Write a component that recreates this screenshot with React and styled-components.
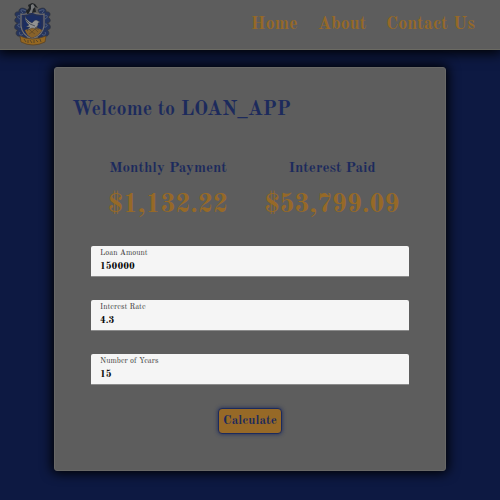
import React, { useState } from "react";
import styled, { createGlobalStyle, ThemeProvider } from "styled-components";

const theme = {
  gray: "#5d5d5d",
  navy: "#0d1942",
  ink: "#1c2a5c",
  gold: "#966927",
  serif: '"Old Standard TT", "Liberation Serif", serif',
};

const GlobalStyle = createGlobalStyle`
  *, *::before, *::after { box-sizing: border-box; }
  body {
    margin: 0;
    background: ${theme.navy};
    font-family: ${theme.serif};
    font-weight: 700;
  }
`;

const Page = styled.div`
  display: flex;
  flex-direction: column;
  min-height: 100vh;
`;

const Header = styled.header`
  display: flex;
  align-items: center;
  justify-content: space-between;
  padding: 0 25px 1px 14px;
  height: 50px;
  background: ${(p) => p.theme.gray};
  border-bottom: 1px solid #6b6a62;
  box-shadow: 0 1px 12px 2px #000;
`;

const HomeLink = styled.a`
  display: flex;
`;

const Nav = styled.nav`
  display: flex;
  gap: 20px;
`;

const NavLink = styled.a`
  color: ${(p) => p.theme.gold};
  font-size: 18px;
  line-height: 24px;
  text-decoration: none;
`;

const Card = styled.main`
  margin: 17px 54px 30px;
  padding: 28px 17px 36px;
  background: ${(p) => p.theme.gray};
  border: 1px solid #686866;
  border-radius: 3px;
  box-shadow: 0 0 12px 2px #000;
`;

const Title = styled.h1`
  margin: 0;
  color: ${(p) => p.theme.ink};
  font-size: 20px;
  line-height: 28px;
`;

const Results = styled.section`
  display: grid;
  grid-template-columns: 1fr 1fr;
  margin: 33px 0 22px;
  padding: 0 14px;
  text-align: center;
`;

const Result = styled.div`
  display: flex;
  flex-direction: column;
  align-items: center;
`;

const ResultLabel = styled.h2`
  margin: 0;
  color: ${(p) => p.theme.ink};
  font-size: 15px;
  line-height: 24px;
`;

const ResultValue = styled.output`
  margin-top: 6px;
  margin-bottom: 1px;
  color: ${(p) => p.theme.gold};
  font-size: 26px;
  line-height: 36px;
`;

const Form = styled.form`
  display: flex;
  flex-direction: column;
  gap: 23px;
  padding: 0 19px;
`;

const Field = styled.label`
  display: flex;
  flex-direction: column;
  height: 31px;
  padding: 2px 9px;
  background: #f5f5f5;
  border-bottom: 1px solid #8b8b8b;
  border-radius: 2px 2px 0 0;
`;

const FieldLabel = styled.span`
  color: #3c3c3c;
  font-size: 8px;
  font-weight: 400;
  line-height: 11px;
`;

const FieldInput = styled.input`
  width: 100%;
  padding: 0;
  border: 0;
  outline: 0;
  background: transparent;
  color: #080808;
  font: 700 10px/14px ${(p) => p.theme.serif};
`;

const Button = styled.button`
  align-self: center;
  width: 64px;
  height: 26px;
  padding: 0;
  background: ${(p) => p.theme.gold};
  border: 1px solid ${(p) => p.theme.ink};
  border-radius: 4px;
  box-shadow: 0 0 4px ${(p) => p.theme.ink};
  color: ${(p) => p.theme.ink};
  font: 700 13px/20px ${(p) => p.theme.serif};
  cursor: pointer;
`;

function Crest() {
  return (
    <svg width="37" height="46" viewBox="0 0 37 46" aria-hidden="true">
      <g fill="#25345c" stroke="#30343c" strokeWidth=".7">
        <path d="M13 9C8 5 4 8 5 11c-5-1-5 4-2 5-4 3-2 6 1 6-5 2-4 7 0 7-4 3-1 7 2 6 0 4 4 4 6 3l2-4L9 18Z" />
        <path d="M24 9c5-4 9-1 8 2 5-1 5 4 2 5 4 3 2 6-1 6 5 2 4 7 0 7 4 3 1 7-2 6 0 4-4 4-6 3l-2-4 5-16Z" />
      </g>
      <g fill="none" stroke="#5c6984" strokeWidth=".8">
        <path d="M12 10C6 7 6 10 9 12M6 15c-3-2-3 2 0 3M6 23c-4 0-2 4 1 3M6 31c-2 3 2 4 3 2M25 10c6-3 6 0 3 2M31 15c3-2 3 2 0 3M31 23c4 0 2 4-1 3M31 31c2 3-2 4-3 2" />
      </g>
      <path d="M7 13q6 1 11-2 5 3 12 2v12q-1 9-12 13Q8 34 7 25Z" fill="#202f62" stroke="#77736d" strokeWidth="1.2" />
      <path d="M9 15q5 0 9-2 5 2 10 2v10q-1 7-10 11-8-4-9-11Z" fill="#1b2d62" stroke="#30343d" strokeWidth=".5" />
      <path d="m11 29 3-1 2-2 3 1 3-1 4 2 2 1q-2 5-10 8-6-3-7-8Z" fill="#88622a" />
      <path d="m13 30 2-2 3 3 3-3 3 3m-9 2 3-2 3 2" fill="none" stroke="#5e4725" strokeWidth=".7" />
      <path d="M11 15q1 4 7 7l2-2q2-2 4 0l2 1-2 1q1 3-3 5l4 1-7-1-5 2 3-3-4 0 3-2q-4-3-4-9Z" fill="#929292" stroke="#30363d" strokeWidth=".4" />
      <path d="m12 19 4 4 5 2" fill="none" stroke="#353b45" strokeWidth=".7" />
      <path d="m12 10 3-3-1-3 4-2 3 1 3 4-3-1 1 5-4 1-5 1Z" fill="#202326" />
      <path d="m17 4 2-1 2 3-2 2-1 4-3 0 2-4Z" fill="#77797b" />
      <path d="M6 35q12 6 26 0l-1 6q-12 6-24 0Z" fill="#946721" stroke="#5b4325" strokeWidth=".8" />
      <path d="m10 38 2 3m2-2v3m2-3 2 3m2-3v3m2-3 2 2m2-3 1 3" stroke="#514229" strokeWidth=".9" />
    </svg>
  );
}

const dollars = new Intl.NumberFormat("en-US", { style: "currency", currency: "USD" });

const fields = [
  { name: "amount", label: "Loan Amount" },
  { name: "rate", label: "Interest Rate" },
  { name: "years", label: "Number of Years" },
];

export default function App() {
  const [values, setValues] = useState({ amount: "150000", rate: "4.3", years: "15" });
  const [result, setResult] = useState({ monthly: 1132.22, interest: 53799.09 });

  const update = (event) =>
    setValues({ ...values, [event.target.name]: event.target.value });

  const calculate = (event) => {
    event.preventDefault();
    const amount = Number(values.amount);
    const rate = Number(values.rate) / 1200;
    const months = Number(values.years) * 12;
    if (!(amount > 0 && months > 0 && rate >= 0)) return;
    const monthly = rate ? (amount * rate) / (1 - (1 + rate) ** -months) : amount / months;
    setResult({ monthly, interest: monthly * months - amount });
  };

  return (
    <ThemeProvider theme={theme}>
      <GlobalStyle />
      <Page>
        <Header>
          <HomeLink href="#home" aria-label="Home">
            <Crest />
          </HomeLink>
          <Nav>
            <NavLink href="#home">Home</NavLink>
            <NavLink href="#about">About</NavLink>
            <NavLink href="#contact">Contact Us</NavLink>
          </Nav>
        </Header>
        <Card>
          <Title>Welcome to LOAN_APP</Title>
          <Results>
            <Result>
              <ResultLabel>Monthly Payment</ResultLabel>
              <ResultValue>{dollars.format(result.monthly)}</ResultValue>
            </Result>
            <Result>
              <ResultLabel>Interest Paid</ResultLabel>
              <ResultValue>{dollars.format(result.interest)}</ResultValue>
            </Result>
          </Results>
          <Form onSubmit={calculate}>
            {fields.map(({ name, label }) => (
              <Field key={name}>
                <FieldLabel>{label}</FieldLabel>
                <FieldInput name={name} inputMode="decimal" value={values[name]} onChange={update} />
              </Field>
            ))}
            <Button type="submit">Calculate</Button>
          </Form>
        </Card>
      </Page>
    </ThemeProvider>
  );
}
